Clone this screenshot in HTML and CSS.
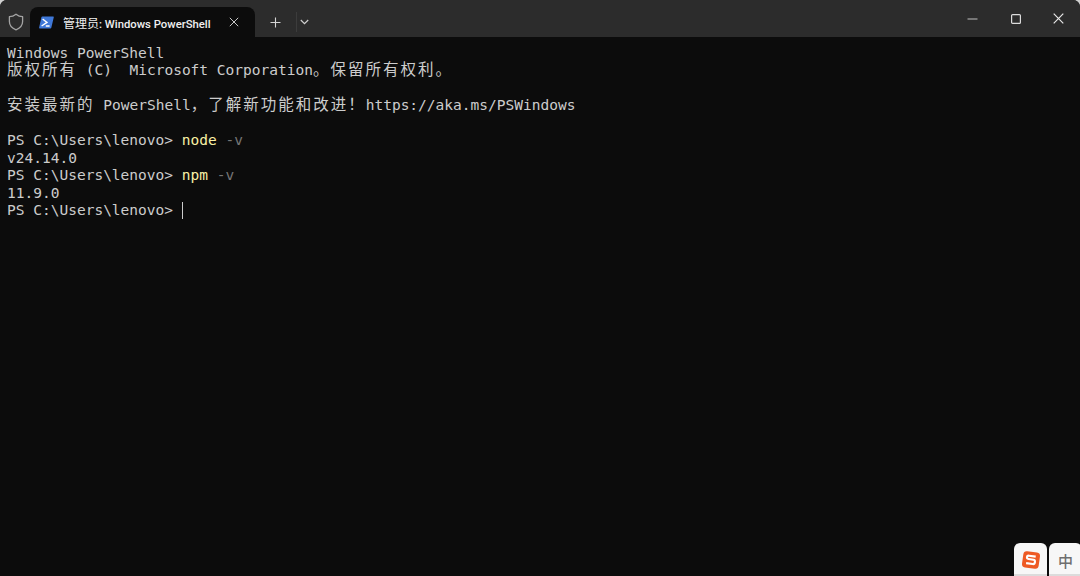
FILE: index.html
```html
<!DOCTYPE html>
<html lang="zh-CN">
<head>
<meta charset="utf-8">
<title>管理员: Windows PowerShell</title>
<link rel="stylesheet" href="styles.css">
</head>
<body>
<div class="window">
  <header class="titlebar">
    <svg class="shield" width="16" height="18" viewBox="0 0 16 18"><path d="M8 1.2 C10 2.8 12.4 3.6 14.6 3.7 V8.6 C14.6 12.6 11.8 15.4 8 16.8 C4.2 15.4 1.4 12.6 1.4 8.6 V3.7 C3.6 3.6 6 2.8 8 1.2 Z" fill="none" stroke="#a3a3a3" stroke-width="1.3" stroke-linejoin="round"/></svg>
    <div class="tab">
      <svg class="ps-icon" width="15" height="13" viewBox="0 0 15 13"><path d="M3.2 0.5 H14.2 C14.7 0.5 14.9 0.8 14.8 1.2 L12.3 11.8 C12.2 12.2 11.9 12.5 11.4 12.5 H0.8 C0.3 12.5 0 12.2 0.1 11.8 L2.4 1.2 C2.5 0.8 2.8 0.5 3.2 0.5 Z" fill="#3f78d8"/><path d="M3.6 3 L8 6.4 L2.6 10" fill="none" stroke="#fff" stroke-width="1.4"/><path d="M6.8 10 H10.6" stroke="#fff" stroke-width="1.4"/></svg>
      <span class="tab-title"><span class="tab-cjk">管理员</span>: Windows PowerShell</span>
      <svg class="tab-close" width="10" height="10" viewBox="0 0 10 10"><path d="M0.8 0.8 L9.2 9.2 M9.2 0.8 L0.8 9.2" stroke="#c9c9c9" stroke-width="1"/></svg>
    </div>
    <button class="new-tab"><svg width="11" height="11" viewBox="0 0 11 11"><path d="M5.5 0.5 V10.5 M0.5 5.5 H10.5" stroke="#d6d6d6" stroke-width="1.1"/></svg></button>
    <span class="sep"></span>
    <button class="drop"><svg width="9" height="6" viewBox="0 0 9 6"><path d="M0.8 1 L4.5 4.7 L8.2 1" fill="none" stroke="#cfcfcf" stroke-width="1.2"/></svg></button>
    <div class="controls">
      <button class="ctl"><svg width="11" height="2" viewBox="0 0 11 2"><path d="M0.5 1 H10.5" stroke="#a8a8a8" stroke-width="1.2"/></svg></button>
      <button class="ctl"><svg width="10" height="10" viewBox="0 0 10 10"><rect x="0.6" y="0.6" width="8.8" height="8.8" rx="1" fill="none" stroke="#dcdcdc" stroke-width="1.2"/></svg></button>
      <button class="ctl"><svg width="11" height="11" viewBox="0 0 11 11"><path d="M0.7 0.7 L10.3 10.3 M10.3 0.7 L0.7 10.3" stroke="#e8e8e8" stroke-width="1.2"/></svg></button>
    </div>
  </header>
  <main class="terminal">
    <div class="line">Windows PowerShell</div>
    <div class="line"><span class="cjk">版权所有</span> (C)  Microsoft Corporation<span class="cjk">。保留所有权利。</span></div>
    <div class="line"></div>
    <div class="line"><span class="cjk">安装最新的</span> PowerShell<span class="cjk">，了解新功能和改进！</span>https://aka.ms/PSWindows</div>
    <div class="line"></div>
    <div class="line">PS C:\Users\lenovo&gt; <span class="cmd">node</span> <span class="arg">-v</span></div>
    <div class="line">v24.14.0</div>
    <div class="line">PS C:\Users\lenovo&gt; <span class="cmd">npm</span> <span class="arg">-v</span></div>
    <div class="line">11.9.0</div>
    <div class="line">PS C:\Users\lenovo&gt; <span class="caret"></span></div>
  </main>
</div>
<div class="ime">
  <div class="key"><svg width="20" height="20" viewBox="0 0 20 20"><rect x="1.6" y="1.8" width="16.8" height="16.4" rx="3.5" fill="#ee5a24" transform="rotate(8 10 10)"/><path d="M14.2 6 H7.4 Q5.6 6 5.6 7.6 Q5.6 9.4 7.4 9.4 H12.4 Q14.2 9.4 14.2 11.6 Q14.2 13.8 12.2 13.8 H5.6" fill="none" stroke="#fff" stroke-width="2.1" transform="rotate(8 10 10)"/></svg></div>
  <div class="key"><span class="zh">中</span></div>
</div>
</body>
</html>
```
FILE: styles.css
```css
* { box-sizing: border-box; }
html, body { margin: 0; height: 100%; overflow: hidden; background: #cfcfcf; }
.window {
  width: 1080px;
  height: 576px;
  display: flex;
  flex-direction: column;
  border-radius: 7px 7px 0 0;
  overflow: hidden;
  background: #0c0c0c;
}
.titlebar {
  flex: 0 0 37px;
  display: flex;
  align-items: flex-end;
  background: #2c2c2c;
}
.shield { margin: 0 6px 6px 8px; }
.tab {
  width: 225px;
  height: 30px;
  display: flex;
  align-items: center;
  background: #0c0c0c;
  border-radius: 8px 8px 0 0;
  padding-left: 9px;
  position: relative;
}
.ps-icon { flex: none; }
.tab-title {
  margin-left: 9px;
  width: 162px;
  font: 500 11.3px "Roboto", "Noto Sans CJK SC", sans-serif;
  color: #f0f0f0;
  white-space: nowrap;
}
.tab-cjk { font-size: 12px; font-weight: 400; }
.tab-close { margin-left: 4px; }
button {
  border: 0;
  padding: 0;
  background: none;
  display: flex;
  align-items: center;
  justify-content: center;
}
.new-tab { width: 41px; height: 30px; }
.sep { width: 1px; height: 20px; background: #3c3c3c; margin-bottom: 5px; }
.drop { width: 27px; height: 30px; margin-left: -6px; }
.controls { margin-left: auto; display: flex; height: 37px; }
.ctl { width: 43px; height: 37px; }
.terminal {
  flex: 1;
  padding: 7.5px 7px 0;
  background: #0c0c0c;
  color: #cccccc;
  font-family: "DejaVu Sans Mono", monospace;
  font-size: 14.53px;
}
.line { height: 17.5px; line-height: 17.5px; white-space: pre; }
.cjk {
  font-family: "Noto Sans CJK SC", sans-serif;
  font-size: 15.5px;
  letter-spacing: 2px;
  line-height: 0;
}
.cmd { color: #f9f1a5; }
.arg { color: #767676; }
.caret {
  display: inline-block;
  width: 1px;
  height: 17px;
  background: #cccccc;
  vertical-align: -4px;
}
.ime {
  position: absolute;
  right: -2px;
  bottom: -1px;
  display: flex;
  gap: 2px;
}
.key {
  width: 33px;
  height: 34px;
  background: #f7f7f7;
  border-radius: 6px 6px 0 0;
  display: flex;
  align-items: center;
  justify-content: center;
  box-shadow: inset 0 -3px 0 #dcdcdc;
}
.zh { font: 500 15px "Noto Sans CJK SC", sans-serif; color: #6f6f6f; }
```
